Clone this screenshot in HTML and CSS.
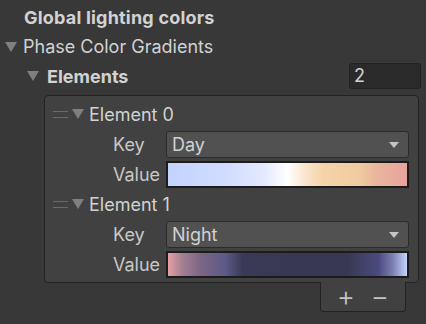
FILE: index.html
```html
<!DOCTYPE html>
<html lang="en">

<head>
    <title>Global lighting colors</title>
    <meta charset="UTF-8">
    <meta name="viewport" content="width=device-width, initial-scale=1">
    <link rel="stylesheet" href="styles.css">
</head>

<body>
    <div class="inspector">
        <div class="header">Global lighting colors</div>

        <div class="row phase">
            <span class="fold"></span>
            <span class="label">Phase Color Gradients</span>
        </div>

        <div class="row elements">
            <span class="fold"></span>
            <span class="label bold">Elements</span>
            <div class="size">2</div>
        </div>

        <div class="list">
            <div class="row item">
                <span class="handle"></span>
                <span class="fold"></span>
                <span class="label">Element 0</span>
            </div>
            <div class="row field">
                <span class="name">Key</span>
                <div class="dropdown">Day<span class="arrow"></span></div>
            </div>
            <div class="row field">
                <span class="name">Value</span>
                <div class="gradient day"></div>
            </div>

            <div class="row item">
                <span class="handle"></span>
                <span class="fold"></span>
                <span class="label">Element 1</span>
            </div>
            <div class="row field">
                <span class="name">Key</span>
                <div class="dropdown">Night<span class="arrow"></span></div>
            </div>
            <div class="row field">
                <span class="name">Value</span>
                <div class="gradient night"></div>
            </div>
        </div>

        <div class="footer">
            <span class="btn">+</span>
            <span class="btn">&minus;</span>
        </div>
    </div>
</body>

</html>
```

FILE: styles.css
```css
* {
    margin: 0;
    padding: 0;
    box-sizing: border-box;
}

body {
    background: #383838;
    color: #d2d2d2;
    font-family: Inter, "Liberation Sans", sans-serif;
    font-size: 18px;
}

.inspector {
    width: 426px;
    padding-top: 4px;
}

.header {
    height: 28px;
    line-height: 28px;
    padding-left: 24px;
    font-weight: bold;
    letter-spacing: 0.2px;
}

.row {
    display: flex;
    align-items: center;
    height: 30px;
}

.fold {
    flex: none;
    width: 0;
    height: 0;
    border-left: 6px solid transparent;
    border-right: 6px solid transparent;
    border-top: 10px solid #7f7f7f;
}

.phase {
    height: 29px;
    padding-left: 5px;
}

.phase .label {
    margin-left: 6px;
}

.elements {
    padding-left: 27px;
}

.elements .label {
    margin-left: 8px;
}

.bold {
    font-weight: bold;
}

.size {
    margin-left: auto;
    margin-right: 5px;
    width: 72px;
    height: 26px;
    line-height: 24px;
    padding-left: 4px;
    background: #2a2a2a;
    border: 1px solid #212121;
    border-radius: 3px;
}

.list {
    margin: 4px 0 0 44px;
    width: 375px;
    padding: 3px 0;
    background: #414141;
    border: 1px solid #222;
    border-radius: 4px;
}

.item {
    padding-left: 8px;
}

.handle {
    flex: none;
    width: 15px;
    height: 7px;
    border-top: 1px solid #6a6a6a;
    border-bottom: 1px solid #6a6a6a;
    margin-right: 4px;
}

.item .label {
    margin-left: 5px;
}

.field {
    padding-left: 68px;
}

.name {
    width: 53px;
    color: #c8c8c8;
}

.dropdown {
    position: relative;
    width: 243px;
    height: 27px;
    line-height: 25px;
    padding-left: 5px;
    background: #515151;
    border: 1px solid #2b2b2b;
    border-radius: 3px;
}

.arrow {
    position: absolute;
    right: 9px;
    top: 10px;
    border-left: 5px solid transparent;
    border-right: 5px solid transparent;
    border-top: 6px solid #c4c4c4;
}

.gradient {
    width: 243px;
    height: 27px;
    border: 2px solid #1c1c1c;
}

.day {
    background: linear-gradient(to right,
            #c3d3ff 0%,
            #d2dcff 25%,
            #e4e9ff 40%,
            #ffffff 50%,
            #fbe6cf 57%,
            #f5d4a8 65%,
            #efcc9f 80%,
            #e9b49c 88%,
            #e8a39f 100%);
}

.night {
    background: linear-gradient(to right,
            #e8a0a4 0%,
            #a27f92 6%,
            #7b6584 14%,
            #5c5a88 24%,
            #3b3a56 31%,
            #383852 50%,
            #383853 75%,
            #4a4a80 88%,
            #7c80b0 94%,
            #c6d3ff 100%);
}

.footer {
    display: flex;
    justify-content: space-around;
    align-items: center;
    margin: -1px 0 0 320px;
    width: 86px;
    height: 30px;
    padding: 0 8px 2px;
    background: #414141;
    border: 1px solid #222;
    border-top: none;
    border-radius: 0 0 4px 4px;
    position: relative;
    font-size: 28px;
    font-weight: 300;
    color: #c4c4c4;
}
```
